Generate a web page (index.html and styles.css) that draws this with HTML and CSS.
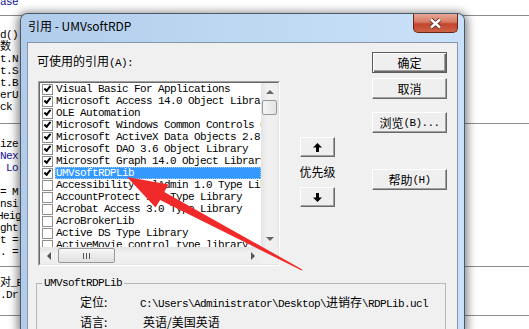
FILE: index.html
```html
<!DOCTYPE html>
<html>
<head>
    <meta charset="UTF-8">
    <link rel="stylesheet" href="styles.css">
</head>
<body>
    <div class="editor">
        <div class="proc proc-top">
            <div class="ln kw">ase</div>
        </div>
        <div class="proc proc-a">
            <div class="ln">d()</div>
            <div class="ln">数</div>
            <div class="ln">t.N</div>
            <div class="ln">t.S</div>
            <div class="ln">t.B</div>
            <div class="ln">erU</div>
            <div class="ln">ck</div>
        </div>
        <div class="proc proc-b">
            <div class="ln">ize</div>
            <div class="ln kw">Nex</div>
            <div class="ln kw"> Lo</div>
            <div class="ln">&nbsp;</div>
            <div class="ln">= M</div>
            <div class="ln">nsi</div>
            <div class="ln cut">Heig</div>
            <div class="ln">ght</div>
            <div class="ln">t =</div>
            <div class="ln">. =</div>
        </div>
        <div class="proc proc-c">
            <div class="ln">对_E</div>
            <div class="ln">.Dr</div>
        </div>
    </div>

    <div class="dialog">
        <div class="titlebar">
            <span class="title">引用 - UMVsoftRDP</span>
            <span class="close">
                <svg width="15" height="11" viewBox="0 0 15 11">
                    <path class="x-edge" d="M3 1.5 L12 9.5 M12 1.5 L3 9.5"/>
                    <path class="x-core" d="M3 1.5 L12 9.5 M12 1.5 L3 9.5"/>
                </svg>
            </span>
        </div>
        <div class="client">
            <div class="main">
                <div class="refs">
                    <div class="label">可使用的引用<span class="mono">(A):</span></div>
                    <div class="listbox">
                        <div class="lb-grid">
                            <div class="items">
                                <div class="item"><span class="chk on"></span><span class="txt">Visual Basic For Applications</span></div>
                                <div class="item"><span class="chk on"></span><span class="txt">Microsoft Access 14.0 Object Library</span></div>
                                <div class="item"><span class="chk on"></span><span class="txt">OLE Automation</span></div>
                                <div class="item"><span class="chk on"></span><span class="txt">Microsoft Windows Common Controls 6.0 (SP6)</span></div>
                                <div class="item"><span class="chk on"></span><span class="txt">Microsoft ActiveX Data Objects 2.8 Library</span></div>
                                <div class="item"><span class="chk on"></span><span class="txt">Microsoft DAO 3.6 Object Library</span></div>
                                <div class="item"><span class="chk on"></span><span class="txt">Microsoft Graph 14.0 Object Library</span></div>
                                <div class="item sel"><span class="chk on"></span><span class="txt">UMVsoftRDPLib</span></div>
                                <div class="item"><span class="chk"></span><span class="txt">Accessibility CplAdmin 1.0 Type Library</span></div>
                                <div class="item"><span class="chk"></span><span class="txt">AccountProtect 1.0 Type Library</span></div>
                                <div class="item"><span class="chk"></span><span class="txt">Acrobat Access 3.0 Type Library</span></div>
                                <div class="item"><span class="chk"></span><span class="txt">AcroBrokerLib</span></div>
                                <div class="item"><span class="chk"></span><span class="txt">Active DS Type Library</span></div>
                                <div class="item"><span class="chk"></span><span class="txt">ActiveMovie control type library</span></div>
                            </div>
                            <div class="vscroll">
                                <span class="sb-btn"><i class="tri up"></i></span>
                                <span class="track"><span class="thumb"></span></span>
                                <span class="sb-btn"><i class="tri down"></i></span>
                            </div>
                            <div class="hscroll">
                                <span class="sb-btn"><i class="tri left"></i></span>
                                <span class="track"><span class="thumb"><i class="grip"></i></span></span>
                                <span class="sb-btn"><i class="tri right"></i></span>
                            </div>
                            <div class="corner"></div>
                        </div>
                    </div>
                </div>

                <div class="priority">
                    <button class="btn sbtn">
                        <svg width="9" height="9" viewBox="0 0 9 9"><path d="M4.5 0 L9 4.5 H6 V9 H3 V4.5 H0 Z"/></svg>
                    </button>
                    <div class="prio-label">优先级</div>
                    <button class="btn sbtn">
                        <svg width="9" height="9" viewBox="0 0 9 9"><path d="M4.5 9 L9 4.5 H6 V0 H3 V4.5 H0 Z"/></svg>
                    </button>
                </div>

                <div class="actions">
                    <button class="btn default">确定</button>
                    <button class="btn b-cancel">取消</button>
                    <button class="btn b-browse">浏览<span class="mono">(B)...</span></button>
                    <button class="btn b-help">帮助<span class="mono">(H)</span></button>
                </div>
            </div>

            <fieldset class="info">
                <legend class="mono">UMVsoftRDPLib</legend>
                <div class="info-body">
                    <div class="info-row">
                        <span>定位:</span>
                        <span class="mono">C:\Users\Administrator\Desktop\<span class="cjk">进销存</span>\RDPLib.ucl</span>
                    </div>
                    <div class="info-row">
                        <span>语言:</span>
                        <span class="lang">英语/美国英语</span>
                    </div>
                </div>
            </fieldset>
        </div>
    </div>

    <svg class="arrow" width="529" height="329" viewBox="0 0 529 329">
        <polygon points="127,177 168.5,184.5 164.3,192 302.3,269.4 301.7,270.6 160.1,200 155.5,207.5"/>
    </svg>
</body>
</html>
```

FILE: styles.css
```css
body {
    margin: 0;
    width: 529px;
    height: 329px;
    overflow: hidden;
    position: relative;
    background: #fff;
    font-family: "Noto Sans CJK SC", sans-serif;
}

.mono {
    font-family: "Liberation Mono", "Noto Sans CJK SC", monospace;
    font-size: 11px;
    letter-spacing: -0.6px;
}

.cjk {
    font-family: "Noto Sans CJK SC", sans-serif;
    font-size: 12px;
    letter-spacing: 0;
}

/* code window behind the dialog */
.editor {
    font: 11px/12px "Liberation Mono", "Noto Sans CJK SC", monospace;
    letter-spacing: -0.6px;
    color: #000;
}

.ln {
    height: 12px;
    white-space: pre;
}

.proc {
    border-bottom: 1px solid #8c8c8c;
}

.proc-top {
    display: flow-root;
    height: 15px;
}

.proc-top .ln {
    margin-top: -4px;
}

.proc-a {
    padding: 13px 0 10px;
}

.proc-b {
    padding: 14px 0 8px;
}

.proc-c {
    padding: 10px 0 14px;
}

.kw {
    color: #10109c;
}

.cut {
    text-indent: -3px;
}

/* dialog window */
.dialog {
    position: absolute;
    left: 20px;
    top: 13px;
    width: 445px;
    height: 316px;
    box-sizing: border-box;
    border: 1px solid #4a5a6e;
    border-bottom: none;
    border-radius: 7px 7px 0 0;
    padding: 0 6px;
    background: linear-gradient(to right, #b1cceb, #c0d9f3 55%, #c9e1f8);
    box-shadow: 0 2px 9px 3px rgba(0, 0, 0, 0.45);
    display: flex;
    flex-direction: column;
}

.titlebar {
    height: 28px;
    flex: none;
    display: flex;
    justify-content: space-between;
    align-items: flex-start;
}

.title {
    font-size: 12px;
    line-height: 14px;
    margin: 5px 0 0 1px;
    color: #000;
}

.close {
    width: 45px;
    height: 19px;
    box-sizing: border-box;
    border: 1px solid #6b2517;
    border-top: none;
    border-radius: 0 0 5px 5px;
    background: linear-gradient(#e8a896, #d67a63 45%, #c2442b 55%, #cd6248);
    display: flex;
    align-items: center;
    justify-content: center;
}

.x-edge {
    stroke: #5a2a22;
    stroke-width: 4.2;
    fill: none;
}

.x-core {
    stroke: #fff;
    stroke-width: 2.4;
    fill: none;
}

.client {
    flex: 1;
    background: #f0f0f0;
    border: 1px solid #8496aa;
    border-bottom: none;
    box-sizing: border-box;
    padding: 9px 0 0 9px;
    overflow: hidden;
}

.main {
    display: flex;
    align-items: flex-start;
}

.refs {
    width: 244px;
    flex: none;
}

.label {
    font-size: 12px;
    line-height: 14px;
    margin-top: 2px;
    white-space: nowrap;
}

.listbox {
    margin: 11px 0 0 1px;
    width: 242px;
    height: 185px;
    box-sizing: border-box;
    border: 1px solid;
    border-color: #a0a0a0 #fff #fff #a0a0a0;
}

.lb-grid {
    height: 100%;
    box-sizing: border-box;
    border: 1px solid;
    border-color: #696969 #e3e3e3 #e3e3e3 #696969;
    background: #fff;
    display: grid;
    grid-template-columns: 1fr 17px;
    grid-template-rows: 1fr 17px;
}

.items {
    overflow: hidden;
    font-family: "Liberation Mono", monospace;
    font-size: 11px;
    letter-spacing: -0.6px;
}

.item {
    height: 12px;
    display: flex;
    align-items: center;
    padding-left: 2px;
    white-space: pre;
}

.chk {
    width: 11px;
    height: 11px;
    flex: none;
    box-sizing: border-box;
    border: 1px solid #8f8f8f;
    background: #fff;
    margin-right: 2px;
    display: flex;
    align-items: center;
    justify-content: center;
}

.chk.on::after {
    content: "";
    width: 5px;
    height: 2px;
    border-left: 2px solid #000;
    border-bottom: 2px solid #000;
    transform: translateY(-1px) rotate(-50deg);
}

.txt {
    flex: 1;
    line-height: 12px;
    padding-left: 1px;
}

.item.sel .txt {
    background: #3399ff;
    color: #fff;
    outline: 1px dotted #9cc9f7;
    outline-offset: -1px;
}

/* scrollbars */
.vscroll,
.hscroll {
    display: flex;
}

.vscroll {
    flex-direction: column;
    background: linear-gradient(to right, #e4e4e4, #f2f2f2 40%, #ededed);
}

.hscroll {
    background: linear-gradient(#e4e4e4, #f2f2f2 40%, #ededed);
}

.sb-btn {
    width: 17px;
    height: 17px;
    flex: none;
    display: flex;
    align-items: center;
    justify-content: center;
}

.track {
    flex: 1;
    display: flex;
}

.vscroll .track {
    flex-direction: column;
    padding: 0 1px;
}

.hscroll .track {
    padding: 1px 0 1px 1px;
}

.thumb {
    box-sizing: border-box;
    border: 1px solid #979797;
    border-radius: 2px;
    display: flex;
    align-items: center;
    justify-content: center;
}

.vscroll .thumb {
    height: 15px;
    background: linear-gradient(to right, #f6f6f6, #e3e3e3);
}

.hscroll .thumb {
    width: 57px;
    background: linear-gradient(#f6f6f6, #e0e0e0);
}

.grip {
    width: 7px;
    height: 6px;
    background: repeating-linear-gradient(to right, #555 0 1px, transparent 1px 3px);
}

.corner {
    background: #f0f0f0;
}

.tri {
    width: 0;
    height: 0;
}

.tri.up {
    border-left: 4px solid transparent;
    border-right: 4px solid transparent;
    border-bottom: 4px solid #666;
}

.tri.down {
    border-left: 4px solid transparent;
    border-right: 4px solid transparent;
    border-top: 4px solid #666;
}

.tri.left {
    border-top: 4px solid transparent;
    border-bottom: 4px solid transparent;
    border-right: 4px solid #555;
}

.tri.right {
    border-top: 4px solid transparent;
    border-bottom: 4px solid transparent;
    border-left: 4px solid #555;
}

/* buttons */
.btn {
    box-sizing: border-box;
    width: 75px;
    height: 21px;
    padding: 0;
    background: #efefef;
    border: 1px solid;
    border-color: #fff #696969 #696969 #fff;
    box-shadow: inset -1px -1px #a0a0a0;
    font-family: "Noto Sans CJK SC", sans-serif;
    font-size: 12px;
    line-height: 14px;
    color: #000;
    display: flex;
    align-items: center;
    justify-content: center;
    white-space: nowrap;
}

.btn.default {
    border-color: #5c5c5c;
    box-shadow: inset 1px 1px #fff, inset -1px -1px #696969, inset -2px -2px #a0a0a0;
}

.b-cancel {
    margin-top: 5px;
}

.b-browse {
    margin-top: 13px;
}

.b-help {
    margin-top: 36px;
}

.priority {
    width: 35px;
    flex: none;
    margin: 85px 0 0 19px;
    display: flex;
    flex-direction: column;
    align-items: center;
}

.btn.sbtn {
    width: 35px;
    height: 20px;
}

.sbtn svg {
    fill: #000;
}

.prio-label {
    font-size: 12px;
    line-height: 14px;
    margin: 8px 0;
    white-space: nowrap;
}

.actions {
    margin-left: 37px;
    display: flex;
    flex-direction: column;
}

/* group box */
.info {
    margin: 11px 0 0 -1px;
    width: 410px;
    box-sizing: border-box;
    border: 1px solid #b4b9be;
    border-bottom: none;
    padding: 0;
    min-width: 0;
}

.info legend {
    margin-left: 5px;
    padding: 0 2px;
    line-height: 12px;
}

.info-body {
    padding-top: 4px;
}

.info-row {
    display: grid;
    grid-template-columns: 60px auto;
    padding-left: 43px;
    font-size: 12px;
    line-height: 18px;
    white-space: nowrap;
}

.lang {
    margin-left: 3px;
}

.arrow {
    position: absolute;
    left: 0;
    top: 0;
    pointer-events: none;
}

.arrow polygon {
    fill: #f02a2a;
}
```
